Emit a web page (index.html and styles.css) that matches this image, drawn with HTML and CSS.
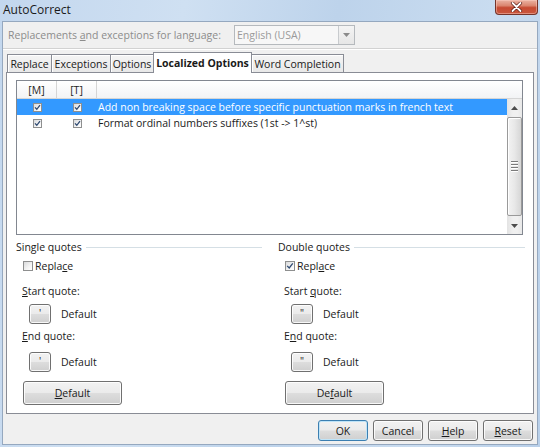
FILE: index.html
```html
<!DOCTYPE html>
<html>
<head>
<meta charset="utf-8">
<link rel="stylesheet" href="styles.css">
</head>
<body>
<div class="window">
  <div class="titlebar">
    <span class="title">AutoCorrect</span>
    <div class="close">
      <svg width="13" height="10" viewBox="0 0 13 10"><path d="M2.5 1 L10.5 9 M10.5 1 L2.5 9" stroke="#5a1a12" stroke-width="3.2" stroke-linecap="round"/><path d="M2.5 1 L10.5 9 M10.5 1 L2.5 9" stroke="#ffffff" stroke-width="1.8" stroke-linecap="round"/></svg>
    </div>
  </div>
  <div class="client">
    <div class="langrow">
      <span class="langlabel">Replacements <u>a</u>nd exceptions for language:</span>
      <div class="combo">
        <span class="combo-text">English (USA)</span>
        <div class="combo-btn"><svg width="7" height="4" viewBox="0 0 7 4"><path d="M0 0 H7 L3.5 4 Z" fill="#8a8a8a"/></svg></div>
      </div>
    </div>
    <div class="sep"></div>
    <div class="tabs">
      <div class="tab tab-replace">Replace</div>
      <div class="tab tab-exceptions">Exceptions</div>
      <div class="tab tab-options">Options</div>
      <div class="tab tab-localized active">Localized Options</div>
      <div class="tab tab-word">Word Completion</div>
    </div>
    <div class="panel">
      <div class="list">
        <div class="list-head">
          <div class="hc hc-col">[M]</div>
          <div class="hc hc-col">[T]</div>
          <div class="hc hc-rest"></div>
        </div>
        <div class="list-body">
          <div class="rows">
            <div class="row selected">
              <div class="cell c-col"><span class="cb checked"><svg width="7" height="7" viewBox="0 0 7 7"><path d="M1 3.4 L2.8 5.3 L6 1.2" stroke="#2f4a72" stroke-width="1.3" fill="none"/></svg></span></div>
              <div class="cell c-col"><span class="cb checked"><svg width="7" height="7" viewBox="0 0 7 7"><path d="M1 3.4 L2.8 5.3 L6 1.2" stroke="#2f4a72" stroke-width="1.3" fill="none"/></svg></span></div>
              <div class="cell c-text">Add non breaking space before specific punctuation marks in french text</div>
            </div>
            <div class="row">
              <div class="cell c-col"><span class="cb checked"><svg width="7" height="7" viewBox="0 0 7 7"><path d="M1 3.4 L2.8 5.3 L6 1.2" stroke="#2f4a72" stroke-width="1.3" fill="none"/></svg></span></div>
              <div class="cell c-col"><span class="cb checked"><svg width="7" height="7" viewBox="0 0 7 7"><path d="M1 3.4 L2.8 5.3 L6 1.2" stroke="#2f4a72" stroke-width="1.3" fill="none"/></svg></span></div>
              <div class="cell c-text">Format ordinal numbers suffixes (1st -&gt; 1^st)</div>
            </div>
          </div>
          <div class="scrollbar">
            <div class="sb-arrow"><svg width="7" height="4" viewBox="0 0 7 4"><path d="M0 4 H7 L3.5 0 Z" fill="#4d4d4d"/></svg></div>
            <div class="sb-thumb">
              <div class="grip"><span></span><span></span><span></span><span></span></div>
            </div>
            <div class="sb-arrow"><svg width="7" height="4" viewBox="0 0 7 4"><path d="M0 0 H7 L3.5 4 Z" fill="#4d4d4d"/></svg></div>
          </div>
        </div>
      </div>
      <div class="groups">
        <div class="group group-left">
          <div class="ghead"><span class="gtitle">Single quotes</span><span class="gline"></span></div>
          <div class="chkrow"><span class="cb big"></span><span>Repla<u>c</u>e</span></div>
          <div class="qlabel"><u>S</u>tart quote:</div>
          <div class="qrow q-start"><div class="btn qbtn">'</div><span class="qdef">Default</span></div>
          <div class="qlabel q-endlabel"><u>E</u>nd quote:</div>
          <div class="qrow q-end"><div class="btn qbtn">'</div><span class="qdef">Default</span></div>
          <div class="btn bigbtn"><span><u>D</u>efault</span></div>
        </div>
        <div class="group group-right">
          <div class="ghead"><span class="gtitle">Double quotes</span><span class="gline"></span></div>
          <div class="chkrow"><span class="cb big checked"><svg width="8" height="8" viewBox="0 0 8 8"><path d="M1.2 3.9 L3.2 6 L6.8 1.4" stroke="#2f4a72" stroke-width="1.3" fill="none"/></svg></span><span>Repl<u>a</u>ce</span></div>
          <div class="qlabel">Start <u>q</u>uote:</div>
          <div class="qrow q-start"><div class="btn qbtn">"</div><span class="qdef">Default</span></div>
          <div class="qlabel q-endlabel">E<u>n</u>d quote:</div>
          <div class="qrow q-end"><div class="btn qbtn">"</div><span class="qdef">Default</span></div>
          <div class="btn bigbtn"><span>De<u>f</u>ault</span></div>
        </div>
      </div>
    </div>
    <div class="buttons">
      <div class="btn dlgbtn default">OK</div>
      <div class="btn dlgbtn">Cancel</div>
      <div class="btn dlgbtn"><span><u>H</u>elp</span></div>
      <div class="btn dlgbtn"><span><u>R</u>eset</span></div>
    </div>
  </div>
</div>
</body>
</html>
```
FILE: styles.css
```css
html, body {
  margin: 0;
  padding: 0;
}
body {
  font-family: "Open Sans", "Noto Sans", sans-serif;
  font-size: 10.5px;
  color: #1a1a1a;
}
u {
  text-decoration: underline;
  text-underline-offset: 1px;
}
.window {
  width: 540px;
  height: 447px;
  display: flex;
  flex-direction: column;
  background: linear-gradient(100deg, #c3d7ee 0%, #cfe0f2 30%, #bdd3eb 55%, #c9dcf0 80%, #b8cfe9 100%);
  overflow: hidden;
}
.titlebar {
  height: 21px;
  flex: none;
  display: flex;
  justify-content: space-between;
  align-items: flex-start;
}
.title {
  padding: 2px 0 0 3px;
  font-size: 12px;
  line-height: 16px;
  color: #1b1b1b;
}
.close {
  width: 43px;
  height: 15px;
  box-sizing: border-box;
  margin-right: 2px;
  border: 1px solid #75342a;
  border-top: none;
  border-radius: 0 0 4px 4px;
  background: linear-gradient(180deg, #eab3a3 0%, #db8670 40%, #c64a32 55%, #c9583f 100%);
  box-shadow: inset 0 0 0 1px rgba(255, 210, 200, 0.45);
  display: flex;
  align-items: center;
  justify-content: center;
}
.client {
  flex: 1;
  margin: 0 2px 2px 2px;
  border: 1px solid #95a8bf;
  background: #f0f0f0;
  display: flex;
  flex-direction: column;
}
.langrow {
  height: 26px;
  flex: none;
  display: flex;
  align-items: center;
  padding-left: 5px;
}
.langlabel {
  width: 226px;
  color: #8c8c8c;
}
.combo {
  width: 121px;
  height: 20px;
  box-sizing: border-box;
  border: 1px solid #b5b9bd;
  background: #f7f7f7;
  display: flex;
  align-items: center;
}
.combo-text {
  flex: 1;
  padding-left: 2px;
  color: #9a9a9a;
}
.combo-btn {
  width: 16px;
  height: 18px;
  box-sizing: border-box;
  border-left: 1px solid #c8cbce;
  background: linear-gradient(#f4f4f4, #e6e6e6);
  display: flex;
  align-items: center;
  justify-content: center;
}
.sep {
  height: 1px;
  flex: none;
  background: #d2d2d2;
  border-bottom: 1px solid #ffffff;
}
.tabs {
  height: 20px;
  flex: none;
  margin-top: 2px;
  padding-left: 4px;
  display: flex;
  align-items: flex-end;
  position: relative;
  z-index: 2;
}
.tab {
  box-sizing: border-box;
  height: 18px;
  margin-right: -1px;
  border: 1px solid #898c95;
  border-bottom: none;
  background: linear-gradient(#f5f5f5, #e8e8e8);
  box-shadow: inset 1px 1px 0 #ffffff;
  display: flex;
  align-items: center;
  justify-content: center;
  color: #1a1a1a;
  white-space: nowrap;
}
.tab-replace { width: 45px; }
.tab-exceptions { width: 60px; }
.tab-options { width: 44px; }
.tab-localized { width: 99px; }
.tab-word { width: 93px; }
.tab.active {
  height: 21px;
  margin-bottom: -1px;
  background: #ffffff;
  box-shadow: none;
  font-weight: 700;
  position: relative;
  z-index: 3;
}
.panel {
  height: 342px;
  flex: none;
  box-sizing: border-box;
  margin: 0 3px 0 3px;
  border: 1px solid #898c95;
  background: #ffffff;
  padding: 7px 0 0 9px;
  position: relative;
  z-index: 1;
}
.list {
  width: 507px;
  height: 155px;
  box-sizing: border-box;
  border: 1px solid #828790;
  display: flex;
  flex-direction: column;
}
.list-head {
  height: 18px;
  flex: none;
  box-sizing: border-box;
  display: flex;
  background: linear-gradient(#ffffff, #f2f3f5);
  border-bottom: 1px solid #d5d5d5;
}
.hc {
  box-sizing: border-box;
  display: flex;
  align-items: center;
  justify-content: center;
  border-right: 1px solid #d5d5d5;
  color: #1e1e1e;
}
.hc-col { width: 40px; }
.hc-rest { flex: 1; border-right: none; }
.list-body {
  flex: 1;
  display: flex;
}
.rows {
  flex: 1;
}
.row {
  height: 16px;
  display: flex;
  align-items: center;
  white-space: nowrap;
}
.row.selected {
  background: #3399ff;
  color: #ffffff;
}
.cell {
  display: flex;
  align-items: center;
}
.c-col {
  width: 40px;
  justify-content: center;
}
.c-text {
  padding-left: 1px;
}
.cb {
  width: 9px;
  height: 9px;
  box-sizing: border-box;
  border: 1px solid #8e8f8f;
  background: linear-gradient(135deg, #d9dadb 0%, #f4f4f4 60%, #ffffff 100%);
  display: inline-flex;
  align-items: center;
  justify-content: center;
  flex: none;
}
.cb.big {
  width: 10px;
  height: 10px;
}
.scrollbar {
  width: 15px;
  flex: none;
  display: flex;
  flex-direction: column;
  background: linear-gradient(90deg, #e3e3e3, #f0f0f0 40%, #f0f0f0 70%, #e8e8e8);
}
.sb-arrow {
  height: 17px;
  flex: none;
  display: flex;
  align-items: center;
  justify-content: center;
}
.sb-thumb {
  flex: 1;
  margin: 1px 0;
  box-sizing: border-box;
  border: 1px solid #9a9a9a;
  border-radius: 2px;
  background: linear-gradient(90deg, #f3f3f3, #e8e8e8 50%, #d6d6d6);
  box-shadow: inset 1px 1px 0 #ffffff;
  display: flex;
  align-items: center;
  justify-content: center;
}
.grip {
  display: flex;
  flex-direction: column;
  gap: 1px;
}
.grip span {
  width: 7px;
  height: 1px;
  background: #7b7b7b;
  border-bottom: 1px solid #ffffff;
}
.groups {
  display: flex;
  gap: 16px;
}
.group {
  display: flex;
  flex-direction: column;
  align-items: flex-start;
}
.group-left { width: 246px; }
.group-right { width: 247px; }
.ghead {
  margin-top: 5px;
  height: 14px;
  width: 100%;
  display: flex;
  align-items: center;
  gap: 4px;
}
.gtitle {
  white-space: nowrap;
}
.gline {
  flex: 1;
  height: 1px;
  background: #d5dfe5;
}
.chkrow {
  margin-top: 5px;
  margin-left: 7px;
  height: 14px;
  display: flex;
  align-items: center;
  gap: 2px;
}
.qlabel {
  margin-top: 11px;
  margin-left: 6px;
  height: 14px;
  line-height: 14px;
  white-space: nowrap;
}
.q-endlabel {
  margin-top: 5px;
}
.qrow {
  margin-left: 13px;
  height: 20px;
  display: flex;
  align-items: center;
}
.q-start { margin-top: 6px; }
.q-end { margin-top: 9px; }
.qdef {
  margin-left: 10px;
}
.btn {
  box-sizing: border-box;
  border: 1px solid #707070;
  border-radius: 3px;
  background: linear-gradient(180deg, #f2f2f2 0%, #ebebeb 48%, #dddddd 52%, #cfcfcf 100%);
  box-shadow: inset 0 0 0 1px rgba(255, 255, 255, 0.85);
  display: flex;
  align-items: center;
  justify-content: center;
  color: #1a1a1a;
}
.qbtn {
  width: 22px;
  height: 20px;
  font-size: 10px;
  line-height: 10px;
  padding-bottom: 3px;
  color: #222222;
}
.bigbtn {
  margin-top: 9px;
  margin-left: 7px;
  width: 99px;
  height: 24px;
}
.buttons {
  flex: 1;
  display: flex;
  justify-content: flex-end;
  align-items: flex-start;
  gap: 5px;
  padding: 6px 4px 0 0;
}
.dlgbtn {
  width: 50px;
  height: 21px;
}
.dlgbtn.default {
  border-color: #3c7fb1;
  box-shadow: inset 0 0 0 1px #bfe4f8;
}
```
